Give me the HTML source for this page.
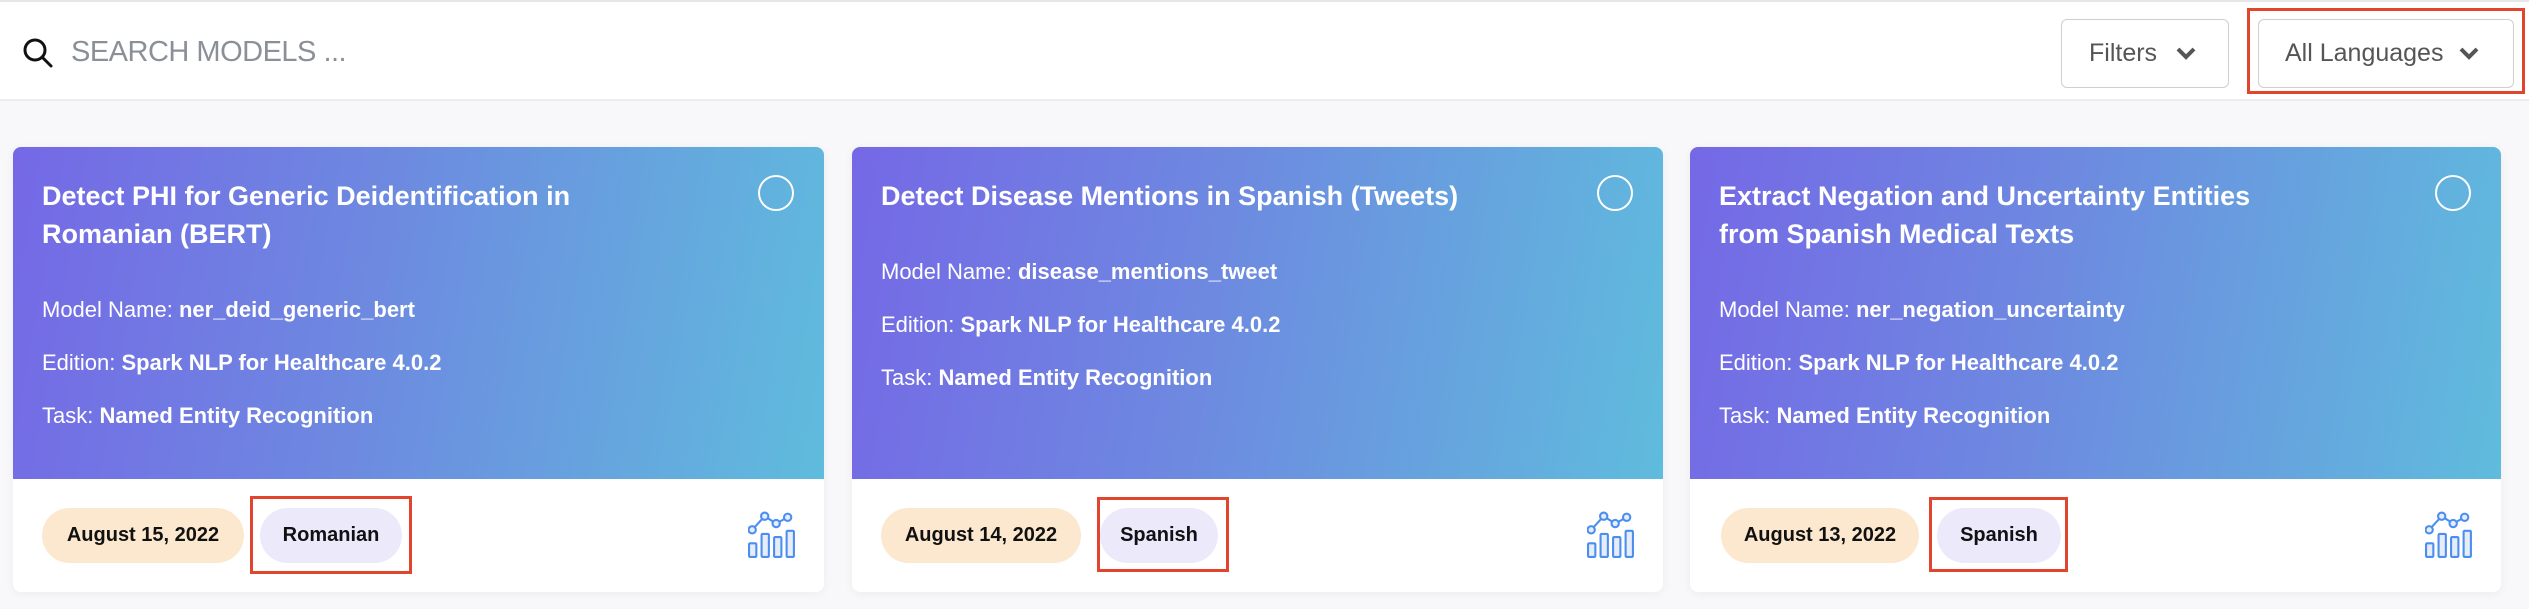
<!DOCTYPE html>
<html><head><meta charset="utf-8"><style>
*{margin:0;padding:0;box-sizing:border-box}
body{width:2529px;height:609px;overflow:hidden;background:#f8f8fa;font-family:"Liberation Sans",sans-serif;position:relative}
.hdr{position:absolute;left:0;top:0;width:2529px;height:101px;background:#fff;border-top:2px solid #e6e6e6;border-bottom:2px solid #ececec}
.search{position:absolute;left:71px;top:34px;font-size:29px;color:#8b9098;letter-spacing:-0.5px}
.btn{position:absolute;top:17px;height:69px;border:1.5px solid #cfcfcf;border-radius:6px;background:#fff;color:#555;font-size:25px;line-height:66px}
.btn svg{position:absolute;top:26px}
.red{position:absolute;border:3px solid #e2452d}
.card{position:absolute;top:147px;width:811px;height:445px;background:#fff;border-radius:8px;box-shadow:0 2px 10px rgba(0,0,0,0.05);overflow:hidden}
.grad{position:absolute;left:0;top:0;width:811px;height:332px;background:linear-gradient(100deg,#7568e6 0%,#6d8ae0 45%,#5fbcdd 100%)}
.title{position:absolute;left:29px;top:30px;width:650px;color:#fff;font-weight:bold;font-size:27px;line-height:38px}
.circ{position:absolute;left:745px;top:28px;width:36px;height:36px;border:2.5px solid #fff;border-radius:50%}
.ln{position:absolute;left:29px;color:#fff;font-size:22px}
.ln b{font-weight:bold}
.pill{position:absolute;top:361px;height:55px;border-radius:28px;font-weight:bold;font-size:20px;line-height:55px;text-align:center;color:#111}
.date{background:#fbe8cf}
.lang{background:#ece9fb}
.chart{position:absolute;left:735px;top:364px}
</style></head><body>
<div class="hdr">
<svg style="position:absolute;left:22px;top:35px" width="32" height="32" viewBox="0 0 32 32"><circle cx="13" cy="13" r="10" fill="none" stroke="#111" stroke-width="3"/><line x1="20.5" y1="20.5" x2="29" y2="29" stroke="#111" stroke-width="3" stroke-linecap="round"/></svg>
<div class="search">SEARCH MODELS ...</div>
<div class="btn" style="left:2061px;width:168px"><span style="position:absolute;left:27px">Filters</span><svg style="left:113px" width="22" height="14" viewBox="0 0 22 14"><path d="M3 3 L11 11 L19 3" fill="none" stroke="#555" stroke-width="4"/></svg></div>
<div class="btn" style="left:2258px;width:256px"><span style="position:absolute;left:26px">All Languages</span><svg style="left:199px" width="22" height="14" viewBox="0 0 22 14"><path d="M3 3 L11 11 L19 3" fill="none" stroke="#555" stroke-width="4"/></svg></div>
</div>
<div class="red" style="left:2247px;top:8px;width:278px;height:86px"></div>

<div class="card" style="left:13px">
<div class="grad"></div>
<div class="title">Detect PHI for Generic Deidentification in Romanian (BERT)</div>
<div class="circ"></div>
<div class="ln" style="top:150px">Model Name: <b>ner_deid_generic_bert</b></div>
<div class="ln" style="top:203px">Edition: <b>Spark NLP for Healthcare 4.0.2</b></div>
<div class="ln" style="top:256px">Task: <b>Named Entity Recognition</b></div>
<div class="pill date" style="left:29px;width:202px">August 15, 2022</div>
<div class="pill lang" style="left:247px;width:142px">Romanian</div>
<svg class="chart" width="48" height="48" viewBox="0 0 46 46"><g fill="#e6ecf8" stroke="#4a8ef0" stroke-width="2"><polyline points="4,18 16,5 27,12 38,6" fill="none"/><circle cx="4" cy="18" r="3.5"/><circle cx="16" cy="5" r="3.5"/><circle cx="27" cy="12" r="3.5"/><circle cx="38" cy="6" r="3.5"/><rect x="1" y="31" width="7" height="13" rx="1"/><rect x="13" y="22" width="7" height="22" rx="1"/><rect x="25" y="25" width="7" height="19" rx="1"/><rect x="37" y="19" width="7" height="25" rx="1"/></g></svg>
</div>

<div class="card" style="left:852px">
<div class="grad"></div>
<div class="title">Detect Disease Mentions in Spanish (Tweets)</div>
<div class="circ"></div>
<div class="ln" style="top:112px">Model Name: <b>disease_mentions_tweet</b></div>
<div class="ln" style="top:165px">Edition: <b>Spark NLP for Healthcare 4.0.2</b></div>
<div class="ln" style="top:218px">Task: <b>Named Entity Recognition</b></div>
<div class="pill date" style="left:29px;width:200px">August 14, 2022</div>
<div class="pill lang" style="left:248px;width:118px">Spanish</div>
<svg class="chart" width="48" height="48" viewBox="0 0 46 46"><g fill="#e6ecf8" stroke="#4a8ef0" stroke-width="2"><polyline points="4,18 16,5 27,12 38,6" fill="none"/><circle cx="4" cy="18" r="3.5"/><circle cx="16" cy="5" r="3.5"/><circle cx="27" cy="12" r="3.5"/><circle cx="38" cy="6" r="3.5"/><rect x="1" y="31" width="7" height="13" rx="1"/><rect x="13" y="22" width="7" height="22" rx="1"/><rect x="25" y="25" width="7" height="19" rx="1"/><rect x="37" y="19" width="7" height="25" rx="1"/></g></svg>
</div>

<div class="card" style="left:1690px">
<div class="grad"></div>
<div class="title" style="width:570px">Extract Negation and Uncertainty Entities from Spanish Medical Texts</div>
<div class="circ"></div>
<div class="ln" style="top:150px">Model Name: <b>ner_negation_uncertainty</b></div>
<div class="ln" style="top:203px">Edition: <b>Spark NLP for Healthcare 4.0.2</b></div>
<div class="ln" style="top:256px">Task: <b>Named Entity Recognition</b></div>
<div class="pill date" style="left:31px;width:198px">August 13, 2022</div>
<div class="pill lang" style="left:247px;width:124px">Spanish</div>
<svg class="chart" width="48" height="48" viewBox="0 0 46 46"><g fill="#e6ecf8" stroke="#4a8ef0" stroke-width="2"><polyline points="4,18 16,5 27,12 38,6" fill="none"/><circle cx="4" cy="18" r="3.5"/><circle cx="16" cy="5" r="3.5"/><circle cx="27" cy="12" r="3.5"/><circle cx="38" cy="6" r="3.5"/><rect x="1" y="31" width="7" height="13" rx="1"/><rect x="13" y="22" width="7" height="22" rx="1"/><rect x="25" y="25" width="7" height="19" rx="1"/><rect x="37" y="19" width="7" height="25" rx="1"/></g></svg>
</div>

<div class="red" style="left:250px;top:496px;width:162px;height:78px"></div>
<div class="red" style="left:1097px;top:497px;width:132px;height:75px"></div>
<div class="red" style="left:1929px;top:497px;width:139px;height:75px"></div>
</body></html>
